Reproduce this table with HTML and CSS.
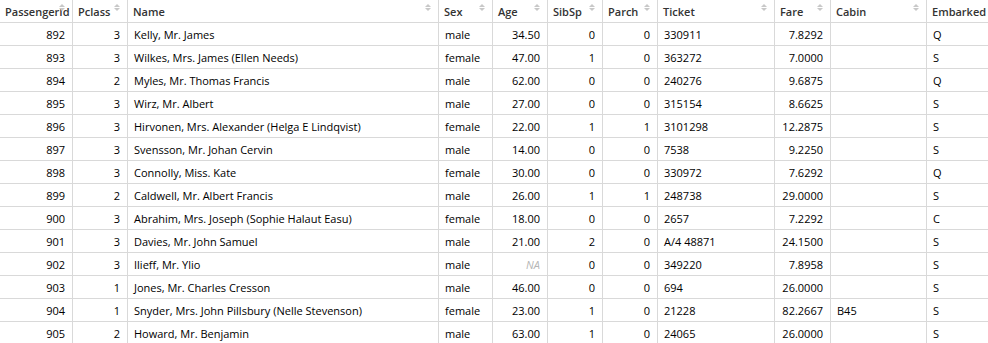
FILE: index.html
```html
<!DOCTYPE html>
<html>
<head>
<meta charset="utf-8">
<link rel="stylesheet" href="styles.css">
</head>
<body>
<div class="wrap">
<table class="grid">
<colgroup>
<col class="c1"><col class="c2"><col class="c3"><col class="c4"><col class="c5"><col class="c6"><col class="c7"><col class="c8"><col class="c9"><col class="c10"><col class="c11">
</colgroup>
<thead>
<tr>
<th>PassengerId<span class="sort"></span></th>
<th>Pclass<span class="sort"></span></th>
<th>Name<span class="sort"></span></th>
<th>Sex<span class="sort"></span></th>
<th>Age<span class="sort"></span></th>
<th>SibSp<span class="sort"></span></th>
<th>Parch<span class="sort"></span></th>
<th>Ticket<span class="sort"></span></th>
<th>Fare<span class="sort"></span></th>
<th>Cabin<span class="sort"></span></th>
<th>Embarked<span class="sort"></span></th>
</tr>
</thead>
<tbody>
<tr><td class="n">892</td><td class="n">3</td><td>Kelly, Mr. James</td><td>male</td><td class="n">34.50</td><td class="n">0</td><td class="n">0</td><td>330911</td><td class="n">7.8292</td><td></td><td>Q</td></tr>
<tr><td class="n">893</td><td class="n">3</td><td>Wilkes, Mrs. James (Ellen Needs)</td><td>female</td><td class="n">47.00</td><td class="n">1</td><td class="n">0</td><td>363272</td><td class="n">7.0000</td><td></td><td>S</td></tr>
<tr><td class="n">894</td><td class="n">2</td><td>Myles, Mr. Thomas Francis</td><td>male</td><td class="n">62.00</td><td class="n">0</td><td class="n">0</td><td>240276</td><td class="n">9.6875</td><td></td><td>Q</td></tr>
<tr><td class="n">895</td><td class="n">3</td><td>Wirz, Mr. Albert</td><td>male</td><td class="n">27.00</td><td class="n">0</td><td class="n">0</td><td>315154</td><td class="n">8.6625</td><td></td><td>S</td></tr>
<tr><td class="n">896</td><td class="n">3</td><td>Hirvonen, Mrs. Alexander (Helga E Lindqvist)</td><td>female</td><td class="n">22.00</td><td class="n">1</td><td class="n">1</td><td>3101298</td><td class="n">12.2875</td><td></td><td>S</td></tr>
<tr><td class="n">897</td><td class="n">3</td><td>Svensson, Mr. Johan Cervin</td><td>male</td><td class="n">14.00</td><td class="n">0</td><td class="n">0</td><td>7538</td><td class="n">9.2250</td><td></td><td>S</td></tr>
<tr><td class="n">898</td><td class="n">3</td><td>Connolly, Miss. Kate</td><td>female</td><td class="n">30.00</td><td class="n">0</td><td class="n">0</td><td>330972</td><td class="n">7.6292</td><td></td><td>Q</td></tr>
<tr><td class="n">899</td><td class="n">2</td><td>Caldwell, Mr. Albert Francis</td><td>male</td><td class="n">26.00</td><td class="n">1</td><td class="n">1</td><td>248738</td><td class="n">29.0000</td><td></td><td>S</td></tr>
<tr><td class="n">900</td><td class="n">3</td><td>Abrahim, Mrs. Joseph (Sophie Halaut Easu)</td><td>female</td><td class="n">18.00</td><td class="n">0</td><td class="n">0</td><td>2657</td><td class="n">7.2292</td><td></td><td>C</td></tr>
<tr><td class="n">901</td><td class="n">3</td><td>Davies, Mr. John Samuel</td><td>male</td><td class="n">21.00</td><td class="n">2</td><td class="n">0</td><td>A/4 48871</td><td class="n">24.1500</td><td></td><td>S</td></tr>
<tr><td class="n">902</td><td class="n">3</td><td>Ilieff, Mr. Ylio</td><td>male</td><td class="n na">NA</td><td class="n">0</td><td class="n">0</td><td>349220</td><td class="n">7.8958</td><td></td><td>S</td></tr>
<tr><td class="n">903</td><td class="n">1</td><td>Jones, Mr. Charles Cresson</td><td>male</td><td class="n">46.00</td><td class="n">0</td><td class="n">0</td><td>694</td><td class="n">26.0000</td><td></td><td>S</td></tr>
<tr><td class="n">904</td><td class="n">1</td><td>Snyder, Mrs. John Pillsbury (Nelle Stevenson)</td><td>female</td><td class="n">23.00</td><td class="n">1</td><td class="n">0</td><td>21228</td><td class="n">82.2667</td><td>B45</td><td>S</td></tr>
<tr><td class="n">905</td><td class="n">2</td><td>Howard, Mr. Benjamin</td><td>male</td><td class="n">63.00</td><td class="n">1</td><td class="n">0</td><td>24065</td><td class="n">26.0000</td><td></td><td>S</td></tr>
</tbody>
</table>
</div>
</body>
</html>
```
FILE: styles.css
```css
html, body {
  margin: 0;
  padding: 0;
  background: #fff;
}
.wrap {
  width: 988px;
  height: 343px;
  overflow: hidden;
}
.grid {
  table-layout: fixed;
  border-collapse: separate;
  border-spacing: 0;
  width: 1007px;
  font-family: "Open Sans", "Noto Sans", sans-serif;
  font-size: 11px;
  color: #000;
}
.c1 { width: 73px; }
.c2 { width: 55px; }
.c3 { width: 311px; }
.c4 { width: 54px; }
.c5 { width: 55px; }
.c6 { width: 55px; }
.c7 { width: 55px; }
.c8 { width: 117px; }
.c9 { width: 56px; }
.c10 { width: 96px; }
.c11 { width: 80px; }
.grid th, .grid td {
  box-sizing: border-box;
  border-right: 1px solid #d9d9d9;
  border-bottom: 1px solid #d9d9d9;
  padding: 0 6px;
  white-space: nowrap;
  overflow: hidden;
  text-align: left;
}
.grid th {
  height: 23px;
  font-weight: 600;
  font-size: 11px;
  color: #333;
  position: relative;
  vertical-align: middle;
  padding-left: 5px;
}
.grid td {
  height: 23px;
  vertical-align: middle;
}
.grid td.n {
  text-align: right;
  padding-right: 7px;
}
.grid td.na {
  font-style: italic;
  color: #b5b5b5;
}
.sort {
  position: absolute;
  right: 7px;
  top: 4px;
  width: 0;
  height: 0;
}
.sort::before, .sort::after {
  content: "";
  position: absolute;
  right: 0;
  border-left: 3px solid transparent;
  border-right: 3px solid transparent;
}
.sort::before {
  top: 0;
  border-bottom: 3px solid #c8c8c8;
}
.sort::after {
  top: 4px;
  border-top: 3px solid #c8c8c8;
}
```
